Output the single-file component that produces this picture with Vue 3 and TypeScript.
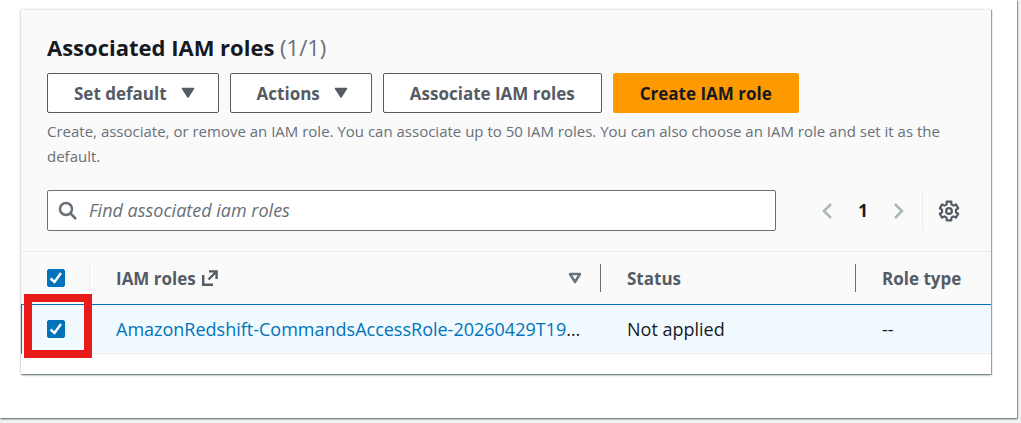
<script setup lang="ts">
import { computed, ref } from 'vue'

interface Role {
  name: string
  status: string
  type: string
  selected: boolean
}

const roles = ref<Role[]>([
  { name: 'AmazonRedshift-CommandsAccessRole-20260429T19', status: 'Not applied', type: '--', selected: true },
])
const query = ref('')

const selectedCount = computed(() => roles.value.filter((r) => r.selected).length)
const allSelected = computed({
  get: () => selectedCount.value === roles.value.length,
  set: (on: boolean) => roles.value.forEach((r) => (r.selected = on)),
})

// Six-toothed gear outline centred in a 20 x 20 box.
const gearPath = (() => {
  const points: string[] = []
  for (let i = 0; i < 6; i++) {
    const steps: [number, number][] = [[-20, 6.4], [-14, 8.7], [14, 8.7], [20, 6.4]]
    for (const [offset, radius] of steps) {
      const a = ((i * 60 - 90 + offset) * Math.PI) / 180
      points.push(`${(10 + radius * Math.cos(a)).toFixed(2)} ${(10 + radius * Math.sin(a)).toFixed(2)}`)
    }
  }
  return `M${points.join('L')}Z`
})()
</script>

<template>
  <main class="page">
    <section class="outer">
      <div class="panel">
        <header class="head">
          <h2>Associated IAM roles <span>({{ selectedCount }}/{{ roles.length }})</span></h2>
          <div class="actions">
            <button type="button" class="btn">
              Set default
              <svg class="caret" viewBox="0 0 14 12" aria-hidden="true"><path d="M1.5 1.5h11L7 10z" /></svg>
            </button>
            <button type="button" class="btn">
              Actions
              <svg class="caret" viewBox="0 0 14 12" aria-hidden="true"><path d="M1.5 1.5h11L7 10z" /></svg>
            </button>
            <button type="button" class="btn">Associate IAM roles</button>
            <button type="button" class="btn primary">Create IAM role</button>
          </div>
          <p>
            Create, associate, or remove an IAM role. You can associate up to 50 IAM roles. You can also choose an IAM
            role and set it as the default.
          </p>
          <div class="tools">
            <label class="search">
              <svg viewBox="0 0 20 20" aria-hidden="true">
                <circle cx="8" cy="8" r="6" />
                <path d="M12.5 12.5L18 18" />
              </svg>
              <input v-model="query" type="text" placeholder="Find associated iam roles" aria-label="Find associated iam roles" />
            </label>
            <nav class="pager" aria-label="Pages">
              <button type="button" aria-label="Previous page" disabled>
                <svg viewBox="0 0 12 18" aria-hidden="true"><path d="M10 2L3 9l7 7" /></svg>
              </button>
              <button type="button" class="current" aria-current="page">1</button>
              <button type="button" aria-label="Next page" disabled>
                <svg viewBox="0 0 12 18" aria-hidden="true"><path d="M2 2l7 7-7 7" /></svg>
              </button>
            </nav>
            <button type="button" class="settings" aria-label="Settings">
              <svg viewBox="0 0 20 20" aria-hidden="true">
                <path :d="gearPath" />
                <circle cx="10" cy="10" r="2.6" />
              </svg>
            </button>
          </div>
        </header>
        <table>
          <colgroup>
            <col class="c-check" />
            <col class="c-name" />
            <col class="c-status" />
            <col />
          </colgroup>
          <thead>
            <tr>
              <th scope="col"><div class="cell check"><input v-model="allSelected" type="checkbox" aria-label="Select all roles" /></div></th>
              <th scope="col">
                <div class="cell">
                  <span class="name">
                    IAM roles
                    <svg class="external" viewBox="0 0 16 16" aria-hidden="true">
                      <path d="M1.2 5v9.8H11M7 1.4h7.6V9M14 2L6.5 9.5" />
                    </svg>
                  </span>
                  <svg class="sort" viewBox="0 0 14 12" aria-hidden="true"><path d="M2 2h10L7 10z" /></svg>
                </div>
              </th>
              <th scope="col"><div class="cell">Status</div></th>
              <th scope="col"><div class="cell last">Role type</div></th>
            </tr>
          </thead>
          <tbody>
            <tr v-for="role in roles" :key="role.name">
              <td class="pick">
                <input v-model="role.selected" type="checkbox" :aria-label="'Select ' + role.name" />
                <div class="marker"></div>
              </td>
              <td><a href="#">{{ role.name }}</a>…</td>
              <td>{{ role.status }}</td>
              <td>{{ role.type }}</td>
            </tr>
          </tbody>
        </table>
      </div>
    </section>
  </main>
</template>

<style>
body {
  margin: 0;
  background: #f2f3f3;
}
</style>

<style scoped>
* {
  box-sizing: border-box;
}
.page {
  padding: 0 4px 5px 0;
  font-family: "Open Sans", "Noto Sans", sans-serif;
  font-size: 18px;
  line-height: 25px;
  color: #16191f;
}
.outer {
  padding: 9px 26px 44px 21px;
  background: #fff;
  box-shadow: 0 1px 2px rgba(0, 28, 36, 0.45), 1px 1px 1px rgba(0, 28, 36, 0.3);
}
.panel {
  padding-bottom: 20px;
  background: #fff;
  border-top: 1px solid #eaeded;
  box-shadow: 0 1px 2px rgba(0, 28, 36, 0.45), 1px 1px 1px rgba(0, 28, 36, 0.3);
}
.head {
  padding: 23px 26px 20px;
  background: #fafafa;
  border-bottom: 1px solid #eaeded;
}
h2 {
  margin: 0 0 12px;
  font-size: 22px;
  line-height: 28px;
  font-weight: 700;
}
h2 span {
  font-weight: 400;
  color: #687078;
}
button,
input {
  font: inherit;
}
button {
  cursor: pointer;
}
.actions {
  display: flex;
  gap: 11px;
}
.btn {
  display: flex;
  align-items: center;
  gap: 14px;
  height: 40px;
  padding: 0 26px;
  border: 1px solid #545b64;
  border-radius: 2px;
  background: #fff;
  color: #545b64;
  font-size: 17px;
  font-weight: 700;
  white-space: nowrap;
}
.btn:has(svg) {
  padding-right: 23px;
}
.primary {
  border-color: #f90;
  background: #f90;
  color: #16191f;
}
.caret {
  width: 14px;
  height: 12px;
  fill: #545b64;
  stroke: #545b64;
  stroke-width: 1.5;
  stroke-linejoin: round;
}
p {
  margin: 6px 0 21px;
  font-size: 15px;
  color: #687078;
}
.tools {
  display: flex;
  align-items: center;
}
.search {
  display: flex;
  flex: 1;
  align-items: center;
  gap: 11px;
  height: 41px;
  padding: 0 10px;
  border: 1px solid #687078;
  border-radius: 2px;
  background: #fff;
}
.search svg {
  width: 20px;
  height: 20px;
  fill: none;
  stroke: #687078;
  stroke-width: 2.5;
}
.search input {
  flex: 1;
  min-width: 0;
  padding: 0;
  border: 0;
  outline: 0;
  background: none;
}
.search input::placeholder {
  color: #687078;
  font-style: italic;
  opacity: 1;
}
.pager {
  display: flex;
  align-items: center;
  margin-left: 33px;
}
.pager button,
.settings {
  display: grid;
  place-items: center;
  width: 36px;
  height: 41px;
  padding: 0;
  border: 0;
  background: none;
  color: #16191f;
}
.pager svg {
  width: 12px;
  height: 18px;
  fill: none;
  stroke: #aab7b8;
  stroke-width: 2.5;
}
.pager .current {
  font-size: 17px;
  font-weight: 700;
}
.settings {
  width: 43px;
  padding-left: 10px;
  margin-left: 5px;
  border-left: 1px solid #eaeded;
}
.settings svg {
  width: 22px;
  height: 22px;
  fill: none;
  stroke: #545b64;
  stroke-width: 2;
  stroke-linejoin: round;
}
table {
  width: 100%;
  table-layout: fixed;
  border-collapse: separate;
  border-spacing: 0;
}
.c-check {
  width: 69px;
}
.c-name {
  width: 511px;
}
.c-status {
  width: 255px;
}
th {
  height: 52px;
  padding: 0;
  background: #fafafa;
  color: #545b64;
  font-size: 17px;
  text-align: left;
}
.cell {
  display: flex;
  align-items: center;
  justify-content: space-between;
  height: 28px;
  padding: 0 18px 0 26px;
  border-right: 1px solid #687078;
  white-space: nowrap;
}
.cell.check {
  border-color: #eaeded;
}
.cell.last {
  padding-right: 0;
  border: 0;
}
.name {
  display: flex;
  align-items: center;
  gap: 6px;
}
.external {
  width: 16px;
  height: 16px;
  fill: none;
  stroke: #545b64;
  stroke-width: 2.4;
}
.sort {
  width: 14px;
  height: 12px;
  fill: none;
  stroke: #687078;
  stroke-width: 2.4;
  stroke-linejoin: round;
}
td {
  height: 50px;
  padding: 0 0 0 26px;
  border-top: 1px solid #0073bb;
  border-bottom: 1px solid #eaeded;
  background: #f1faff;
  white-space: nowrap;
}
td.pick {
  position: relative;
  padding-left: 25px;
  border-left: 1px solid #0073bb;
}
a {
  color: #0073bb;
  text-decoration: none;
}
input[type="checkbox"] {
  appearance: none;
  display: block;
  flex: none;
  width: 18px;
  height: 18px;
  margin: 0;
  border-radius: 2px;
  border: 1px solid #687078;
  background: #fff;
}
input[type="checkbox"]:checked {
  border-color: #0073bb;
  background: #0073bb url("data:image/svg+xml,%3Csvg xmlns='http://www.w3.org/2000/svg' viewBox='0 0 16 16'%3E%3Cpath d='M2.5 8.5l4 3.5L13 3' fill='none' stroke='white' stroke-width='2.4'/%3E%3C/svg%3E") center / 16px 16px no-repeat;
}
.marker {
  position: absolute;
  top: -11px;
  left: 2px;
  width: 68px;
  height: 64px;
  border: 8px solid #e81a1a;
  pointer-events: none;
}
</style>
